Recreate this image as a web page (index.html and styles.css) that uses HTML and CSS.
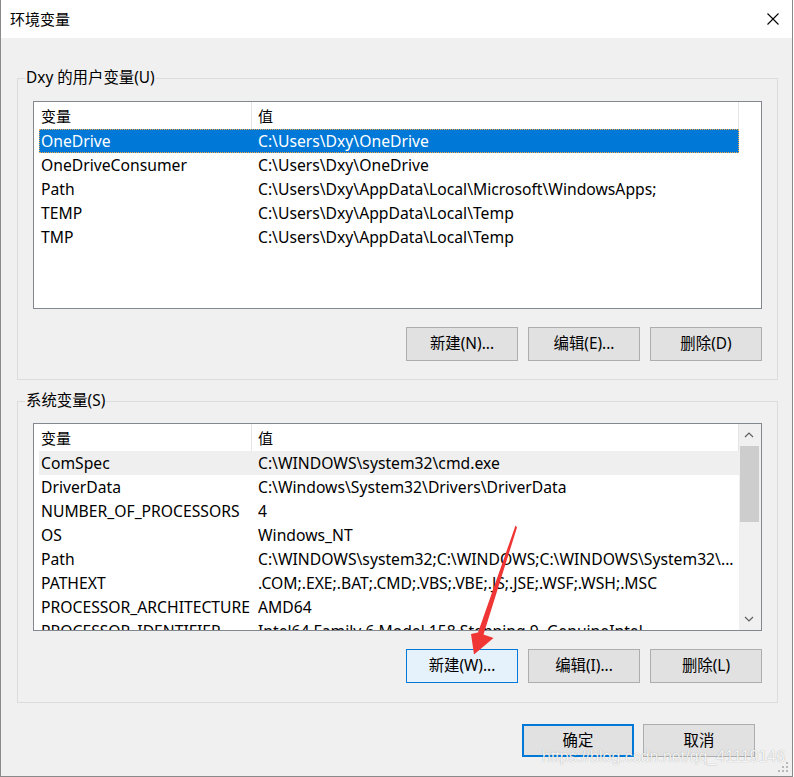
FILE: index.html
```html
<!DOCTYPE html>
<html lang="zh-CN">
<head>
<meta charset="utf-8">
<title>环境变量</title>
<link rel="stylesheet" href="styles.css">
</head>
<body>
<div class="window">
  <div class="titlebar">
    <span class="title">环境变量</span>
    <svg class="close" width="12" height="12" viewBox="0 0 12 12"><path d="M0.5 0.5 L11.5 11.5 M11.5 0.5 L0.5 11.5" stroke="#000" stroke-width="1.1" fill="none"/></svg>
  </div>
  <div class="content">
    <section class="group group-user">
      <span class="group-title">Dxy 的用户变量(U)</span>
      <div class="list">
        <div class="list-view">
          <div class="list-head"><span class="hcell hname">变量</span><span class="hcell hvalue">值</span></div>
          <div class="row selected"><span class="name">OneDrive</span><span class="value">C:\Users\Dxy\OneDrive</span></div>
          <div class="row"><span class="name">OneDriveConsumer</span><span class="value">C:\Users\Dxy\OneDrive</span></div>
          <div class="row"><span class="name">Path</span><span class="value">C:\Users\Dxy\AppData\Local\Microsoft\WindowsApps;</span></div>
          <div class="row"><span class="name">TEMP</span><span class="value">C:\Users\Dxy\AppData\Local\Temp</span></div>
          <div class="row"><span class="name">TMP</span><span class="value">C:\Users\Dxy\AppData\Local\Temp</span></div>
        </div>
      </div>
      <div class="buttons">
        <button class="btn">新建(N)...</button>
        <button class="btn">编辑(E)...</button>
        <button class="btn">删除(D)</button>
      </div>
    </section>

    <section class="group group-sys">
      <span class="group-title">系统变量(S)</span>
      <div class="list">
        <div class="list-view">
          <div class="list-head"><span class="hcell hname">变量</span><span class="hcell hvalue">值</span></div>
          <div class="row hover"><span class="name">ComSpec</span><span class="value">C:\WINDOWS\system32\cmd.exe</span></div>
          <div class="row"><span class="name">DriverData</span><span class="value">C:\Windows\System32\Drivers\DriverData</span></div>
          <div class="row"><span class="name">NUMBER_OF_PROCESSORS</span><span class="value">4</span></div>
          <div class="row"><span class="name">OS</span><span class="value">Windows_NT</span></div>
          <div class="row"><span class="name">Path</span><span class="value">C:\WINDOWS\system32;C:\WINDOWS;C:\WINDOWS\System32\...</span></div>
          <div class="row"><span class="name">PATHEXT</span><span class="value">.COM;.EXE;.BAT;.CMD;.VBS;.VBE;.JS;.JSE;.WSF;.WSH;.MSC</span></div>
          <div class="row"><span class="name">PROCESSOR_ARCHITECTURE</span><span class="value">AMD64</span></div>
          <div class="row"><span class="name">PROCESSOR_IDENTIFIER</span><span class="value">Intel64 Family 6 Model 158 Stepping 9, GenuineIntel</span></div>
        </div>
        <div class="scrollbar">
          <div class="sb-arrow"><svg width="10" height="6" viewBox="0 0 10 6"><path d="M1 5 L5 1 L9 5" stroke="#606060" stroke-width="1.2" fill="none"/></svg></div>
          <div class="sb-thumb"></div>
          <div class="sb-track"></div>
          <div class="sb-arrow"><svg width="10" height="6" viewBox="0 0 10 6"><path d="M1 1 L5 5 L9 1" stroke="#606060" stroke-width="1.2" fill="none"/></svg></div>
        </div>
      </div>
      <div class="buttons">
        <button class="btn btn-hover">新建(W)...</button>
        <button class="btn">编辑(I)...</button>
        <button class="btn">删除(L)</button>
      </div>
    </section>

    <div class="dialog-buttons">
      <button class="btn btn-dlg btn-default">确定</button>
      <button class="btn btn-dlg">取消</button>
    </div>
  </div>

  <svg class="arrow" width="794" height="777" viewBox="0 0 794 777">
    <polygon points="515.5,525.5 517,527.5 483.5,634.5 493.5,638 474,654.5 471,634 478,632.5" fill="#f03535"/>
  </svg>
  <span class="watermark">https://blog.csdn.net/qq_41119146</span>
  <svg class="grip" width="12" height="12" viewBox="0 0 12 12">
    <g fill="#b8b8b8">
      <rect x="8" y="0" width="2" height="2"/>
      <rect x="4" y="4" width="2" height="2"/><rect x="8" y="4" width="2" height="2"/>
      <rect x="0" y="8" width="2" height="2"/><rect x="4" y="8" width="2" height="2"/><rect x="8" y="8" width="2" height="2"/>
    </g>
  </svg>
</div>
</body>
</html>
```

FILE: styles.css
```css
* { box-sizing: border-box; }

body {
  margin: 0;
  background: #ffffff;
  font-family: "Noto Sans", "Noto Sans CJK SC", sans-serif;
  font-size: 15px;
  color: #000;
}

.window {
  position: relative;
  width: 793px;
  height: 777px;
  background: #f0f0f0;
  border-left: 1px solid #8a8a8a;
  border-right: 1px solid #8a8a8a;
  border-bottom: 1px solid #8a8a8a;
  display: flex;
  flex-direction: column;
  overflow: hidden;
}

.titlebar {
  height: 38px;
  flex: none;
  background: #ffffff;
  display: flex;
  align-items: center;
  justify-content: space-between;
  padding: 0 13px 0 9px;
}

.title {
  font-size: 15px;
  line-height: 20px;
}

.close { display: block; }

.content {
  padding: 40px 14px 0 16px;
  display: flex;
  flex-direction: column;
}

.group {
  position: relative;
  border: 1px solid #dcdcdc;
  padding: 22px 15px 18px;
}

.group-sys {
  margin-top: 21px;
  padding: 21px 15px 19px;
}

.group-title {
  position: absolute;
  top: -11px;
  left: 7px;
  padding: 0 1px;
  font-size: 15.4px;
  line-height: 20px;
  background: #f0f0f0;
  white-space: nowrap;
}

.list {
  height: 208px;
  border: 1px solid #828790;
  background: #ffffff;
  overflow: hidden;
  display: flex;
  font-size: 15.7px;
}

.list-view {
  flex: 1;
  min-width: 0;
  overflow: hidden;
}

.list-head {
  height: 27px;
  display: flex;
  font-size: 15px;
}

.hcell {
  display: flex;
  align-items: center;
  border-right: 1px solid #e5e5e5;
  line-height: 20px;
}

.hname {
  width: 218px;
  padding-left: 7px;
}

.hvalue {
  width: 487px;
  padding-left: 6px;
}

.row {
  margin-left: 5px;
  width: 700px;
  height: 24px;
  display: flex;
  align-items: center;
  line-height: 20px;
  white-space: nowrap;
}

.row .name {
  flex: none;
  width: 219px;
  padding-left: 2px;
  overflow: hidden;
}

.row .value {
  flex: 1;
  overflow: hidden;
}

.row.selected {
  background: #0078d7;
  color: #ffffff;
  outline: 1px dotted #f0a848;
  outline-offset: -1px;
}

.row.hover {
  background: #efefef;
}

.scrollbar {
  flex: none;
  width: 22px;
  background: #f0f0f0;
  display: flex;
  flex-direction: column;
}

.sb-arrow {
  height: 22px;
  display: flex;
  align-items: center;
  justify-content: center;
  padding-right: 2px;
}

.sb-arrow svg { display: block; }

.sb-thumb {
  height: 76px;
  margin: 0 2px 0 1px;
  background: #cdcdcd;
}

.sb-track { flex: 1; }

.buttons {
  margin-top: 18px;
  display: flex;
  justify-content: flex-end;
  gap: 10px;
}

.btn {
  width: 112px;
  height: 34px;
  background: #e1e1e1;
  border: 1px solid #adadad;
  font-family: "Noto Sans", "Noto Sans CJK SC", sans-serif;
  font-size: 15.4px;
  color: #000;
  padding: 0;
  line-height: 20px;
}

.btn-hover {
  background: #e5f1fb;
  border-color: #0078d7;
}

.dialog-buttons {
  margin-top: 21px;
  padding-right: 23px;
  display: flex;
  justify-content: flex-end;
  gap: 9px;
}

.btn-dlg { height: 33px; }

.btn-default {
  border: 2px solid #0078d7;
}

.arrow {
  position: absolute;
  left: -1px;
  top: 0;
  pointer-events: none;
}

.watermark {
  position: absolute;
  left: 541px;
  top: 748px;
  font-family: "Liberation Sans", Arial, sans-serif;
  font-size: 16px;
  line-height: 18px;
  color: rgba(255, 255, 255, 0.9);
  text-shadow: 0 0 1px rgba(0, 0, 0, 0.35);
  white-space: nowrap;
}

.grip {
  position: absolute;
  right: 2px;
  bottom: 2px;
}
```
